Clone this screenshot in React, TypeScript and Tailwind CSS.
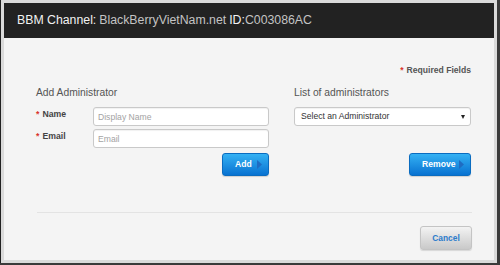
import React from 'react';

// Small right-pointing arrow used on the blue action buttons
function Arrow() {
  return (
    <svg width="5" height="9" viewBox="0 0 5 9" className="shrink-0">
      <path d="M0 0 L5 4.5 L0 9 Z" fill="#1f6cc2" />
    </svg>
  );
}

function BlueButton({ label, width }: { label: string; width: string }) {
  return (
    <button
      type="button"
      className={`${width} h-[23px] flex items-center justify-between pl-[12px] pr-[6px] rounded-[3px] bg-gradient-to-b from-[#34b1f3] to-[#0872d1] border border-[#0a6cc0] text-white text-[8.6px] font-bold shadow-[0_1px_1px_rgba(0,0,0,0.15)]`}
    >
      <span>{label}</span>
      <Arrow />
    </button>
  );
}

function Field({ label, placeholder }: { label: string; placeholder: string }) {
  return (
    <div className="flex items-center">
      <label className="w-[57px] text-[8.7px] font-bold text-[#444] -mt-[3px]">
        <span className="text-[#d9342b] mr-[3px]">*</span>
        {label}
      </label>
      <input
        placeholder={placeholder}
        className="w-[176px] h-[19px] px-[4px] bg-white border border-[#c9c9c9] rounded-[3px] text-[8.6px] text-[#333] placeholder:text-[#a3a3a3] outline-none shadow-[inset_0_1px_1px_rgba(0,0,0,0.06)]"
      />
    </div>
  );
}

export default function App() {
  return (
    <div className="w-[500px] h-[265px] bg-[#3a3a3a] font-['Liberation_Sans',Arial,sans-serif]">
      <div className="w-[497px] h-[263px] bg-[#dadada] p-[3px] border-l border-[#222]">
        <div className="h-full flex flex-col bg-[#f4f4f4]">
          {/* Title bar */}
          <div className="h-[35px] shrink-0 bg-[#222222] flex items-center px-[13px] text-[12.3px] whitespace-nowrap">
            <span className="text-[#f2f2f2]">BBM Channel:</span>
            <span className="text-[#c4c4c4] ml-[3px]">BlackBerryVietNam.net</span>
            <span className="text-[#f2f2f2] ml-[3px]">ID:</span>
            <span className="text-[#c4c4c4]">C003086AC</span>
          </div>

          {/* Body */}
          <div className="flex-1 flex flex-col pl-[32px] pr-[23px]">
            <div className="mt-[26px] h-[12px] leading-[12px] text-right text-[8.6px] font-bold text-[#555]">
              <span className="text-[#d9342b] mr-[3px]">*</span>Required Fields
            </div>

            <div className="mt-[9px] flex gap-[25px]">
              {/* Add administrator */}
              <div className="w-[233px] flex flex-col">
                <h2 className="h-[16px] leading-[16px] text-[10.3px] text-[#555]">Add Administrator</h2>
                <div className="mt-[6px] flex flex-col gap-[3px]">
                  <Field label="Name" placeholder="Display Name" />
                  <Field label="Email" placeholder="Email" />
                </div>
                <div className="mt-[5px] flex justify-end">
                  <BlueButton label="Add" width="w-[47px]" />
                </div>
              </div>

              {/* List of administrators */}
              <div className="w-[177px] flex flex-col">
                <h2 className="h-[16px] leading-[16px] text-[10.3px] text-[#555]">List of administrators</h2>
                <div className="mt-[6px] h-[19px] flex items-center justify-between pl-[6px] pr-[5px] bg-white border border-[#c9c9c9] rounded-[3px] text-[8.6px] text-[#333] shadow-[inset_0_1px_1px_rgba(0,0,0,0.06)]">
                  <span>Select an Administrator</span>
                  <svg width="4" height="4" viewBox="0 0 4 4">
                    <path d="M0 0 L4 0 L2 4 Z" fill="#222" />
                  </svg>
                </div>
                <div className="mt-[27px] flex justify-end">
                  <BlueButton label="Remove" width="w-[62px]" />
                </div>
              </div>
            </div>

            <div className="mt-[36px] ml-[1px] mr-[-1px] border-t border-[#e3e3e3]" />

            <div className="mt-[13px] flex justify-end mr-[-1px]">
              <button
                type="button"
                className="w-[52px] h-[24px] rounded-[3px] bg-gradient-to-b from-[#f3f3f3] to-[#c9c9c9] border border-[#c4c4c4] text-[8.4px] font-bold text-[#2b7ccc] shadow-[0_1px_1px_rgba(0,0,0,0.12)]"
              >
                Cancel
              </button>
            </div>
          </div>
        </div>
      </div>
    </div>
  );
}
